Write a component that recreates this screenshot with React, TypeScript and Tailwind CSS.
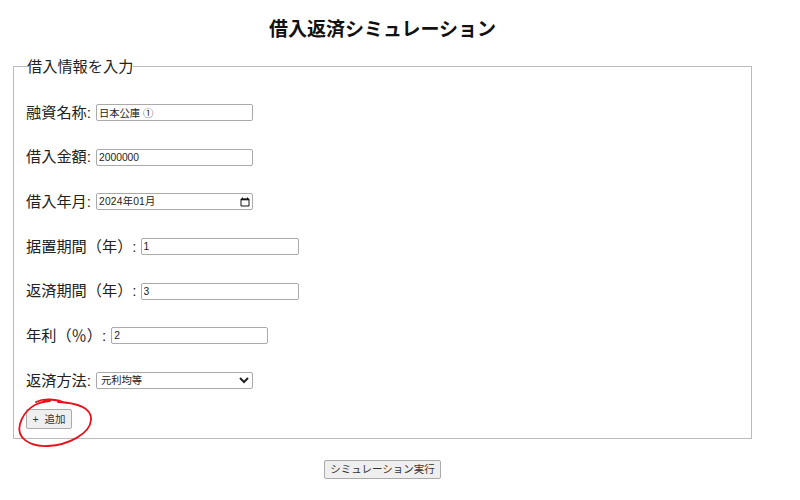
const font = "font-['Liberation_Sans','Noto_Sans_CJK_JP',sans-serif]";

function Row({ label, children }: { label: string; children: React.ReactNode }) {
  return (
    <div className="flex h-[44.7px] items-center">
      <label className="text-[15.2px] leading-none text-[#222] mr-[5px] whitespace-nowrap">{label}</label>
      {children}
    </div>
  );
}

const inputCls =
  "h-[17px] border border-[#aaa] rounded-[2px] pl-[2px] pr-0 text-[10.3px] text-[#222] bg-white outline-none";

export default function App() {
  return (
    <div className={`relative w-[800px] h-[500px] bg-white overflow-hidden ${font}`}>
      <div className="w-[739px] ml-[13px]">
        <h1 className="pt-[17px] h-[58px] text-center text-[19px] leading-[26px] font-bold text-[#111]">
          借入返済シミュレーション
        </h1>
        <fieldset className="border border-[#bbb] h-[381px] pl-[12px] pr-[13px]">
          <legend className="text-[15.2px] leading-[17px] text-[#222] ml-[1px]">借入情報を入力</legend>
          <div className="pt-[15px]">
            <Row label="融資名称:">
              <input className={`${inputCls} w-[157px]`} defaultValue="日本公庫 ①" />
            </Row>
            <Row label="借入金額:">
              <input className={`${inputCls} w-[157px]`} defaultValue="2000000" />
            </Row>
            <Row label="借入年月:">
              <div className={`${inputCls} w-[157px] flex items-center justify-between pr-[2px]`}>
                <span className="tracking-[0.2px]">2024年01月</span>
                <svg width="10" height="10" viewBox="0 0 10 10" fill="none">
                  <path d="M1 2h8v7H1z" stroke="#111" strokeWidth="1" />
                  <path d="M1 2.5h8" stroke="#111" strokeWidth="1.6" />
                  <path d="M2.5 .5v1.5M7.5 .5v1.5" stroke="#111" strokeWidth="1" />
                </svg>
              </div>
            </Row>
            <Row label="据置期間（年）:">
              <input className={`${inputCls} w-[158px] -ml-[1px]`} defaultValue="1" />
            </Row>
            <Row label="返済期間（年）:">
              <input className={`${inputCls} w-[158px] -ml-[1px]`} defaultValue="3" />
            </Row>
            <Row label="年利（％）:">
              <input className={`${inputCls} w-[157px]`} defaultValue="2" />
            </Row>
            <Row label="返済方法:">
              <select className={`${inputCls} w-[157px] h-[15px] !pl-0`} defaultValue="元利均等">
                <option>元利均等</option>
                <option>元金均等</option>
              </select>
            </Row>
            <div className="pt-[6px]">
              <button className="block w-[46px] h-[20px] bg-[#efefef] border border-[#aaa] rounded-[2px] text-[10.5px] leading-none text-[#333] whitespace-nowrap">
                +&nbsp;&nbsp;追加
              </button>
            </div>
          </div>
        </fieldset>
        <div className="flex justify-center pt-[21px]">
          <button className="w-[117px] h-[19px] bg-[#efefef] border border-[#aaa] rounded-[2px] text-[10.5px] leading-none text-[#333]">
            シミュレーション実行
          </button>
        </div>
      </div>
      <svg className="absolute left-0 top-0 pointer-events-none" width="800" height="500" fill="none">
        <path
          d="M36 402 C44 398 56 399 66 403 M50 401 C35 402 24 410 20 424 C16 438 30 447 48 446 C68 445 90 434 91 420 C92 408 78 403 58 402"
          stroke="#e8101a"
          strokeWidth="1.8"
          strokeLinecap="round"
        />
      </svg>
    </div>
  );
}
